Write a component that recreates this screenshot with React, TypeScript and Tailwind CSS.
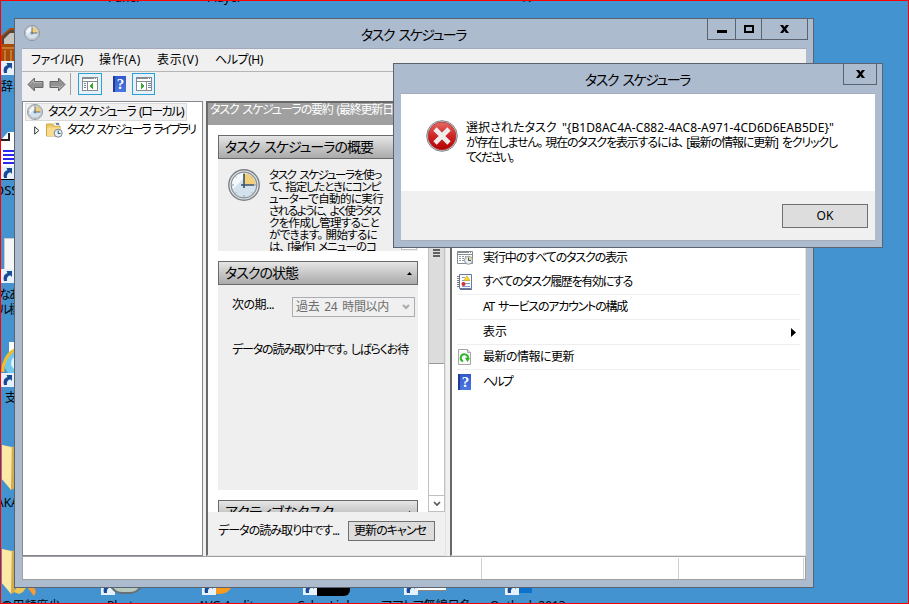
import { useLayoutEffect, useRef } from 'react';
import clsx from 'clsx';

interface FitTextProps {
  children: string;
  className: string;
}

// Spaces the glyphs so that a label fills the width given by its class.
function FitText({ children, className }: FitTextProps) {
  const box = useRef<HTMLDivElement>(null);
  const text = useRef<HTMLSpanElement>(null);

  useLayoutEffect(() => {
    if (!box.current || !text.current) return;
    text.current.style.letterSpacing = '0px';
    const extra = box.current.clientWidth - text.current.getBoundingClientRect().width;
    text.current.style.letterSpacing = `${extra / children.length}px`;
  }, [children]);

  return (
    <div ref={box} className={clsx('shrink-0 whitespace-nowrap', className)}>
      <span ref={text} className="[word-spacing:2px]">
        {children.split(/([、。])/).map((part, idx) =>
          part === '、' || part === '。' ? (
            <span key={idx} className="mr-[3px]">{part}</span>
          ) : (
            part
          ),
        )}
      </span>
    </div>
  );
}

function ClockIcon({ className }: { className: string }) {
  return (
    <svg viewBox="0 0 32 32" className={clsx('shrink-0', className)}>
      <circle cx="16" cy="16" r="15.2" fill="#e8eaec" stroke="#7d8185" strokeWidth="1.4" />
      <circle cx="16" cy="16" r="12.8" fill="#d3e2ec" stroke="#8b9196" strokeWidth="1.2" />
      <path d="M5 20 20 5A11.5 11.5 0 0 0 5 20Z" fill="#f3f8fb" />
      <path d="M16 16V4.500A11.500 11.500 0 0 1 27.500 16Z" fill="#f5cf78" />
      <path d="M16 4v2M16 26v2M4 16h2M26 16h2M7.5 7.5l1 1M24.5 7.5l-1 1M7.5 24.5l1-1M24.5 24.5l-1-1" stroke="#8a9aab" strokeWidth="1" />
      <path d="M16 5v14M13 16h13" stroke="#35536f" strokeWidth="1.6" fill="none" />
    </svg>
  );
}

function ArrowIcon({ className }: { className?: string }) {
  return (
    <svg viewBox="0 0 17 15" className={clsx('h-[15px] w-[17px] shrink-0', className)}>
      <path d="M1 7.5 7.5 1v3.5H16v6H7.5V14Z" fill="#929292" stroke="#666" />
      <path d="M3 7 6.7 3.4v2.2H15" stroke="#b8b8b8" fill="none" />
    </svg>
  );
}

function HelpIcon() {
  return (
    <div className="flex h-4 w-[13px] shrink-0 items-center justify-center border-l-2 border-[#23389a] bg-linear-to-b from-[#3159cf] to-[#4b77df] font-['Liberation_Serif',serif] text-[15px] leading-none font-bold text-white">
      ?
    </div>
  );
}

function PaneIcon({ flip }: { flip?: boolean }) {
  return (
    <svg viewBox="0 0 16 14" className="h-[14px] w-4 shrink-0" shapeRendering="crispEdges">
      <rect x=".5" y=".5" width="15" height="13" fill="#fff" stroke="#858b91" />
      <path d="M1 1.5h14M1 4.5h14" stroke="#858b91" />
      <path d="M12 1.5h1M14 1.5h1" stroke="#fff" />
      {flip ? (
        <>
          <path d="M10.5 5v8" stroke="#858b91" />
          <path d="M12 6.5h3M12 8.5h3M12 10.5h3" stroke="#7085a5" />
          <path d="M5 6v6l4-3Z" fill="#37ad2e" />
        </>
      ) : (
        <>
          <path d="M5.5 5v8" stroke="#858b91" />
          <path d="M1.5 6.5H4M1.5 8.5H4M1.5 10.5H4" stroke="#7085a5" />
          <path d="M11 6v6L7 9Z" fill="#37ad2e" />
        </>
      )}
    </svg>
  );
}

function LibraryIcon() {
  return (
    <svg viewBox="0 0 17 16" className="h-4 w-[17px] shrink-0">
      <path d="M.5 2h6l1 2H14v10H.5Z" fill="#edc967" stroke="#cfa449" />
      <path d="M8 1h5v3H8Z" fill="#fff" stroke="#e0be70" strokeWidth=".7" />
      <path d="M10 1h3v2h-3Z" fill="#5289d0" />
      <path d="M1 5.5h13V14H1Z" fill="#f8dd91" />
      <circle cx="12.2" cy="11.2" r="4" fill="#e7f0f5" stroke="#758390" />
      <path d="M12.2 8.5v3h2.3" stroke="#35536f" fill="none" />
    </svg>
  );
}

function RunningIcon() {
  return (
    <svg viewBox="0 0 16 14" className="h-[14px] w-4 shrink-0">
      <path d="M.5.5h15v12H.5Z" fill="#fff" stroke="#838a92" />
      <path d="M1 1.5h14M1 3.5h14" stroke="#858c94" />
      <path d="M12 1.5h1M14 1.5h1" stroke="#fff" />
      <path d="M2 5.5h7M2 7.5h7M2 9.5h7" stroke="#919aa3" strokeDasharray="2 1" />
      <circle cx="11.5" cy="9.3" r="4" fill="#e9eff1" stroke="#8b9499" />
      <path d="M11.5 9.3V6a3.3 3.3 0 0 1 3.3 3.3Z" fill="#f3d48a" />
      <path d="M11.5 6.5v3H14" stroke="#35536f" fill="none" />
    </svg>
  );
}

function HistoryIcon() {
  return (
    <svg viewBox="0 0 15 16" className="h-4 w-[15px] shrink-0">
      <path d="M2.5.5h12v14h-12Z" fill="#f8fbff" stroke="#6977a6" />
      <path d="M3 15.5h12" stroke="#66708d" />
      <path d="M0 2.5h3M0 4.5h3M0 6.5h3M0 8.5h3M0 10.5h3M0 12.5h3" stroke="#777" />
      <path d="M5 3.5h3M5 6.5h8M8 9.5h5M5 12.5h8" stroke="#7ea0cd" />
      <path d="M10 1.8 13 6.500H7Z" fill="#ffd428" stroke="#d9ad17" strokeWidth=".6" />
      <circle cx="6.5" cy="10" r="2" fill="#d92f2f" />
    </svg>
  );
}

function RefreshIcon() {
  return (
    <svg viewBox="0 0 13 16" className="h-4 w-[13px] shrink-0">
      <path d="M.5.5h9l3 3v12H.5Z" fill="#fafafa" stroke="#a5a5a5" />
      <path d="M9.5.5v3h3" fill="#ddd" stroke="#a5a5a5" />
      <path d="M5 12.2A3.6 3.6 0 1 1 9.9 9.500" fill="none" stroke="#32b52c" strokeWidth="2" />
      <path d="m6.8 8.8 5.2.1-2.4 4.2Z" fill="#32b52c" />
    </svg>
  );
}

function ErrorIcon() {
  return (
    <svg viewBox="0 0 32 32" className="h-8 w-8 shrink-0">
      <defs>
        <linearGradient id="error-red" x1="0" y1="0" x2="0" y2="1">
          <stop stopColor="#e56a65" />
          <stop offset=".5" stopColor="#cf2525" />
          <stop offset="1" stopColor="#b30003" />
        </linearGradient>
      </defs>
      <circle cx="16" cy="16" r="15.3" fill="#dce0e0" stroke="#7d8586" strokeWidth="1" />
      <circle cx="16" cy="16" r="13.9" fill="url(#error-red)" stroke="#a73535" strokeWidth=".8" />
      <path d="m9 9 14 14m0-14-14 14" stroke="#eee" strokeWidth="4.6" />
    </svg>
  );
}

function ShortcutIcon() {
  return (
    <svg viewBox="0 0 14 14" className="h-[14px] w-[14px] shrink-0">
      <path d="M0 0h14v14H0Z" fill="#e7f1fb" />
      <path d="M3 12C2 8 3 5 6.5 4.3L5.5 2H11v6L9.3 6.2C6.5 7 5.5 9 6 12Z" fill="#164b98" />
    </svg>
  );
}

function FolderIcon() {
  return (
    <svg viewBox="0 0 14 47" className="h-[47px] w-[14px]">
      <path d="M1 1 11 3l3 3v36l-4 4-9-11Z" fill="#f7df8e" />
      <path d="m11 3 3-1v42l-4 2Z" fill="#d4ac48" />
      <path d="m1 1 9 3v41L1 35Z" fill="#fbe9a8" />
    </svg>
  );
}

function CloseGlyph() {
  return (
    <svg viewBox="0 0 9 8" className="h-2 w-[9px]">
      <path d="M0 0h3l1.5 2L6 0h3L6 4l3 4H6L4.5 6 3 8H0l3-4Z" fill="#000" />
    </svg>
  );
}

interface SectionProps {
  title: string;
  titleWidth: string;
}

function SectionHeader({ title, titleWidth }: SectionProps) {
  return (
    <div className="flex h-6 w-[200px] shrink-0 items-center justify-between border border-[#6a6a6a] bg-linear-to-b from-[#e6e6e6] to-[#aaaaaa] pr-[5px] pl-1.5">
      <FitText className={clsx('text-[14px] leading-5', titleWidth)}>{title}</FitText>
      <svg viewBox="0 0 5 3" className="h-[3px] w-[5px] shrink-0">
        <path d="M0 3 2.5 0 5 3Z" />
      </svg>
    </div>
  );
}

const overview = [
  { text: 'タスク スケジューラを使っ', width: 'w-[112px]' },
  { text: 'て、指定したときにコンピ', width: 'w-[111px]' },
  { text: 'ューターで自動的に実行', width: 'w-[114px]' },
  { text: 'されるように、よく使うタス', width: 'w-[111px]' },
  { text: 'クを作成し管理すること', width: 'w-[110px]' },
  { text: 'ができます。開始するに', width: 'w-[108px]' },
  { text: 'は、[操作] メニューのコ', width: 'w-[107px]' },
];

const menus = [
  { text: 'ファイル(F)', width: 'w-[52px]' },
  { text: '操作(A)', width: 'w-[42px]' },
  { text: '表示(V)', width: 'w-[42px]' },
  { text: 'ヘルプ(H)', width: 'w-[48px]' },
];

const actions = [
  { text: '実行中のすべてのタスクの表示', width: 'w-[144px]', icon: <RunningIcon />, line: false },
  { text: 'すべてのタスク履歴を有効にする', width: 'w-[149px]', icon: <HistoryIcon />, line: true },
  { text: 'AT サービスのアカウントの構成', width: 'w-[144px]', icon: null, line: true },
  { text: '表示', width: 'w-[24px]', icon: null, line: true, submenu: true },
  { text: '最新の情報に更新', width: 'w-[91px]', icon: <RefreshIcon />, line: true },
  { text: 'ヘルプ', width: 'w-[29px]', icon: <HelpIcon />, line: false },
];

function Desktop() {
  return (
    <div className="text-[12px] leading-none">
      <div className="absolute -top-[8px] left-[108px]">Panel</div>
      <div className="absolute -top-[8px] left-[207px]">Player</div>
      <div className="absolute -top-[8px] left-[523px]">ル</div>
      <svg viewBox="0 0 14 34" className="absolute top-[28px] left-px h-[34px] w-[14px]">
        <path d="M0 8 9 0h5v34H0Z" fill="#a84b0b" />
        <path d="m1 9 8-7h5v14H1Z" fill="#5a4333" />
        <path d="m3 11 6-6h5v11H3Z" fill="#c8c5c1" />
        <path d="M1 20h13M4 22v12M10 22v12" stroke="#d08a3c" strokeWidth="1.5" />
      </svg>
      <div className="absolute top-[61px] left-px"><ShortcutIcon /></div>
      <div className="absolute top-[81px] left-px">辞典</div>
      <svg viewBox="0 0 14 46" className="absolute top-[132px] left-px h-[46px] w-[14px]">
        <path d="M0 8 7 0h7v46H0Z" fill="#fff" />
        <path d="M0 8h8V1" fill="none" stroke="#222" strokeWidth="2" />
        <path d="M2 19h12M2 23h12M2 27h12M2 31h12" stroke="#2828ee" strokeWidth="2" />
      </svg>
      <div className="absolute top-[166px] left-px"><ShortcutIcon /></div>
      <div className="absolute top-[179px] h-px w-[14px] bg-black" />
      <div className="absolute top-[184px] -left-[6px] text-[13px]">OSS</div>
      <div className="absolute top-[238px] left-1 h-[40px] w-3 border border-[#ccc] bg-[#f6f6f6]" />
      <div className="absolute top-[269px] left-px"><ShortcutIcon /></div>
      <div className="absolute top-[289px] -left-px whitespace-nowrap tracking-[-1.5px]">なあ</div>
      <div className="absolute top-[304px] -left-px whitespace-nowrap tracking-[-1.5px]">ル標準</div>
      <svg viewBox="0 0 14 44" className="absolute top-[342px] left-px h-[44px] w-[14px]">
        <path d="M8 0h6v44H8Z" fill="#fff" />
        <circle cx="17" cy="21" r="14" fill="#71c8ed" />
        <circle cx="17" cy="21" r="7" fill="#dff5ff" />
        <path d="M2 30C1 21 7 11 14 8" fill="none" stroke="#f2bc2a" strokeWidth="3" />
      </svg>
      <div className="absolute top-[373px] left-px"><ShortcutIcon /></div>
      <div className="absolute top-[392px] left-[5px]">支</div>
      <div className="absolute top-[444px] left-px"><FolderIcon /></div>
      <div className="absolute top-[497px] -left-1">AKA</div>
      <div className="absolute top-[548px] left-px"><FolderIcon /></div>
      <svg viewBox="0 0 22 12" className="absolute top-[584px] left-[14px] h-3 w-[22px]">
        <path d="M0 8 4 1h10L9 8 5 10Z" fill="#eec654" />
        <path d="M13 0h6l3 8-2 4-7-9Z" fill="#f79b34" />
      </svg>
      <div className="absolute top-[581px] left-[101px] flex">
        <ShortcutIcon />
        <div className="-ml-1.5 h-[13px] w-[34px] rounded-b-full border-2 border-[#667077] bg-[#b8c9bd]" />
      </div>
      <div className="absolute top-[581px] left-[202px] flex">
        <ShortcutIcon />
        <div className="h-[13px] w-[17px] rounded-br-full bg-[#f69a20]" />
      </div>
      <div className="absolute top-[581px] left-[303px] flex">
        <ShortcutIcon />
        <div className="h-[15px] w-[33px] rounded-br-md bg-black" />
      </div>
      <div className="absolute top-[581px] left-[404px] flex">
        <ShortcutIcon />
        <div className="h-[10px] w-7 border-b border-[#888] bg-white" />
      </div>
      <div className="absolute top-[581px] left-[505px] flex">
        <ShortcutIcon />
        <div className="h-[12px] w-[13px] bg-[#0b73cb]" />
      </div>
      <div className="absolute top-[600px] left-px whitespace-nowrap">の用頻度少</div>
      <div className="absolute top-[600px] left-[107px]">Photo</div>
      <div className="absolute top-[600px] left-[198px] whitespace-nowrap">AVG Audit</div>
      <div className="absolute top-[600px] left-[297px] whitespace-nowrap">CyberLink</div>
      <div className="absolute top-[600px] left-[381px] whitespace-nowrap">アアトア無線目名</div>
      <div className="absolute top-[600px] left-[490px] whitespace-nowrap">Outlook 2013</div>
    </div>
  );
}

function TreePane() {
  return (
    <div className="w-[181px] shrink-0 border border-[#828790] bg-white pt-px pl-[2px]">
      <div className="flex h-[18px] w-[162px] items-center border border-[#d9d9d9] bg-[#f0f0f0] pl-px">
        <ClockIcon className="h-4 w-4" />
        <FitText className="ml-[5px] w-[135px] leading-4">タスク スケジューラ (ローカル)</FitText>
      </div>
      <div className="flex h-[18px] items-center pl-[9px]">
        <svg viewBox="0 0 6 9" className="h-[9px] w-[6px]">
          <path d="M.7.8v7.4l4.2-3.7Z" fill="none" stroke="#333" />
        </svg>
        <div className="ml-[6px]"><LibraryIcon /></div>
        <FitText className="ml-[4px] w-[128px] leading-4">タスク スケジューラ ライブラリ</FitText>
      </div>
    </div>
  );
}

function SummaryPane() {
  return (
    <div className="flex w-[240px] shrink-0 flex-col border-t-2 border-r border-b border-l-2 border-t-[#696969] border-r-[#e3e3e3] border-b-[#e3e3e3] border-l-[#696969] bg-[#f0f0f0]">
      <div className="h-[22px] shrink-0 overflow-hidden bg-[#a0a0a0] pl-[2px] text-white">
        <FitText className="w-[183px] text-[12px] leading-[13px]">タスク スケジューラの要約 (最終更新日</FitText>
      </div>
      <div className="flex h-[387px] shrink-0 bg-white">
        <div className="flex w-[220px] flex-col overflow-hidden pt-[10px] pl-[10px]">
          <SectionHeader title="タスク スケジューラの概要" titleWidth="w-[148px]" />
          <div className="flex h-[92px] w-[200px] shrink-0 overflow-hidden bg-[#efefef] pt-[10px] pl-[10px]">
            <ClockIcon className="h-8 w-8" />
            <div className="ml-[9px] w-[117px]">
              {overview.map((line) => (
                <FitText key={line.text} className={clsx('h-3 text-[11.5px] leading-3', line.width)}>
                  {line.text}
                </FitText>
              ))}
            </div>
            <div className="mt-[65px] ml-[15px] h-4 w-4 shrink-0 border border-[#c4c4c4] bg-white" />
          </div>
          <div className="h-[10px] shrink-0" />
          <SectionHeader title="タスクの状態" titleWidth="w-[73px]" />
          <div className="h-[205px] w-[200px] shrink-0 overflow-hidden bg-[#efefef] pt-3 pl-[14px]">
            <div className="flex">
              <FitText className="w-[42px] text-[12px] leading-4">次の期...</FitText>
              <div className="ml-[18px] flex h-5 w-[123px] items-center justify-between border border-[#abadb3] bg-[#f0f0f0] pr-1 pl-[3px] text-[#6d6d6d]">
                <FitText className="w-[93px] text-[12px] leading-4">過去 24 時間以内</FitText>
                <svg viewBox="0 0 8 6" className="h-[6px] w-2">
                  <path d="m1 1 3 3 3-3" fill="none" stroke="#aaa" strokeWidth="2" />
                </svg>
              </div>
            </div>
            <FitText className="mt-[25px] w-[176px] text-[12px] leading-4">データの読み取り中です。しばらくお待</FitText>
          </div>
          <div className="h-[10px] shrink-0" />
          <SectionHeader title="アクティブなタスク" titleWidth="w-[109px]" />
        </div>
        <div className="flex w-[17px] flex-col justify-between border-x border-[#c0c0c0] bg-white">
          <div className="flex h-[239px] flex-col items-center gap-px border-b border-[#999] bg-[#dcdcdc] pt-[124px]">
            <div className="h-[2px] w-[7px] bg-[#606060]" />
            <div className="h-[2px] w-[7px] bg-[#606060]" />
            <div className="h-[2px] w-[7px] bg-[#606060]" />
          </div>
          <div className="flex h-[17px] items-center justify-center border-y border-[#c0c0c0]">
            <svg viewBox="0 0 8 6" className="h-[6px] w-2">
              <path d="m1 1 3 3 3-3" fill="none" stroke="#555" strokeWidth="1.7" />
            </svg>
          </div>
        </div>
      </div>
      <div className="flex pt-[9px] pl-[10px]">
        <FitText className="w-[121px] text-[12px] leading-[19px]">データの読み取り中です...</FitText>
        <div className="ml-[9px] flex h-5 w-[87px] items-center border border-[#707070] bg-[#dddddd] pl-[5px]">
          <FitText className="w-[72px] text-[12px] leading-4">更新のキャンセ</FitText>
        </div>
      </div>
    </div>
  );
}

function ActionsPane() {
  return (
    <div className="min-w-0 flex-1 border-r border-b border-l-2 border-r-[#e3e3e3] border-b-[#e3e3e3] border-l-[#696969] bg-white pt-[144px] pr-[5px] pl-[5px]">
      {actions.map((action) => (
        <div
          key={action.text}
          className={clsx('flex h-[25px] items-center border-b first:pt-[2px]', action.line ? 'border-[#eeeeee]' : 'border-transparent')}
        >
          <div className="flex w-[15px] shrink-0 justify-center">{action.icon}</div>
          <FitText className={clsx('ml-[11px] leading-4', action.width)}>{action.text}</FitText>
          {action.submenu && (
            <svg viewBox="0 0 5 9" className="mr-[4px] ml-auto h-[9px] w-[5px]">
              <path d="M0 0 5 4.5 0 9Z" />
            </svg>
          )}
        </div>
      ))}
    </div>
  );
}

function SchedulerWindow() {
  return (
    <div className="absolute top-[18px] left-[14px] h-[570px] w-[800px] border border-[#5c6370] bg-[#adbbcf]">
      <div className="flex h-[29px] justify-between">
        <ClockIcon className="mt-[6px] ml-[9px] h-4 w-4" />
        <FitText className="mt-[6px] ml-[321px] w-[105px] text-[14px] leading-5">タスク スケジューラ</FitText>
        <div className="mr-[5px] ml-auto flex h-[21px] border-x border-b border-[#5c6370]">
          <div className="flex w-[28px] justify-center border-r border-[#5c6370] pt-[11px]">
            <div className="h-[3px] w-[10px] bg-black" />
          </div>
          <div className="flex w-[26px] justify-center border-r border-[#5c6370] pt-[6px]">
            <div className="h-2 w-[10px] border-2 border-black" />
          </div>
          <div className="flex w-[45px] justify-center pt-[6px]"><CloseGlyph /></div>
        </div>
      </div>
      <div className="ml-[7px] h-[532px] w-[784px] border-t border-[#a1a9bb] bg-[#f0f0f0]">
        <div className="flex h-[23px] items-center gap-4 border-b border-[#b5b5b5] pl-[9px]">
          {menus.map((menu) => (
            <FitText key={menu.text} className={clsx('leading-4', menu.width)}>{menu.text}</FitText>
          ))}
        </div>
        <div className="flex h-[29px] items-start pt-px">
          <ArrowIcon className="mt-[4px] ml-[5px]" />
          <ArrowIcon className="mt-[4px] ml-[5px] rotate-180" />
          <div className="ml-[4px] h-[22px] w-px bg-[#a0a0a0]" />
          <div className="ml-[7px] flex h-[22px] w-6 items-center justify-center border border-[#2c9ed8] bg-[#e5f2fa]"><PaneIcon /></div>
          <div className="mt-[3px] ml-[11px]"><HelpIcon /></div>
          <div className="ml-[6px] flex h-[22px] w-[23px] items-center justify-center border border-[#2c9ed8] bg-[#e5f2fa]"><PaneIcon flip /></div>
        </div>
        <div className="flex h-[455px]">
          <TreePane />
          <div className="w-[3px] shrink-0" />
          <SummaryPane />
          <div className="w-1 shrink-0" />
          <ActionsPane />
        </div>
        <div className="flex h-[24px] border border-[#a0a0a0] bg-white pt-px">
          <div className="w-[459px] border-r border-[#d0d0d0]" />
          <div className="w-[197px] border-r border-[#d0d0d0]" />
          <div className="w-[125px] border-r border-[#d0d0d0]" />
        </div>
      </div>
    </div>
  );
}

function ErrorDialog() {
  return (
    <div className="absolute top-[63px] left-[393px] h-[185px] w-[490px] border border-[#5c6370] bg-[#adbbcf]">
      <div className="flex h-[29px]">
        <FitText className="mt-[6px] ml-[191px] w-[105px] text-[14px] leading-5">タスク スケジューラ</FitText>
        <div className="mr-[5px] ml-auto flex h-[21px] w-[34px] justify-center border-x border-b border-[#5c6370] pt-[6px]">
          <CloseGlyph />
        </div>
      </div>
      <div className="ml-[7px] h-[148px] w-[474px] border-y border-[#a5adbf] bg-[#f0f0f0]">
        <div className="flex h-[97px] bg-white pt-[26px] pl-[25px]">
          <ErrorIcon />
          <div className="ml-[8px] text-[12px] leading-[15px]">
            <FitText className="w-[368px]">{'選択されたタスク "{B1D8AC4A-C882-4AC8-A971-4CD6D6EAB5DE}"'}</FitText>
            <FitText className="w-[371px]">が存在しません。現在のタスクを表示するには、[最新の情報に更新] をクリックし</FitText>
            <FitText className="w-[50px]">てください。</FitText>
          </div>
        </div>
        <div className="mt-[13px] mr-[7px] ml-auto flex h-6 w-[86px] items-center justify-center border border-[#707070] bg-[#dddddd] text-[12px]">
          OK
        </div>
      </div>
    </div>
  );
}

export default function App() {
  return (
    <div className="relative h-[604px] w-[909px] overflow-hidden bg-[#4393d0] font-['Noto_Sans','Noto_Sans_CJK_JP',sans-serif] text-[12px] text-black [font-feature-settings:'palt']">
      <Desktop />
      <SchedulerWindow />
      <ErrorDialog />
      <div className="pointer-events-none absolute inset-0 border border-[#ff0000]" />
    </div>
  );
}
